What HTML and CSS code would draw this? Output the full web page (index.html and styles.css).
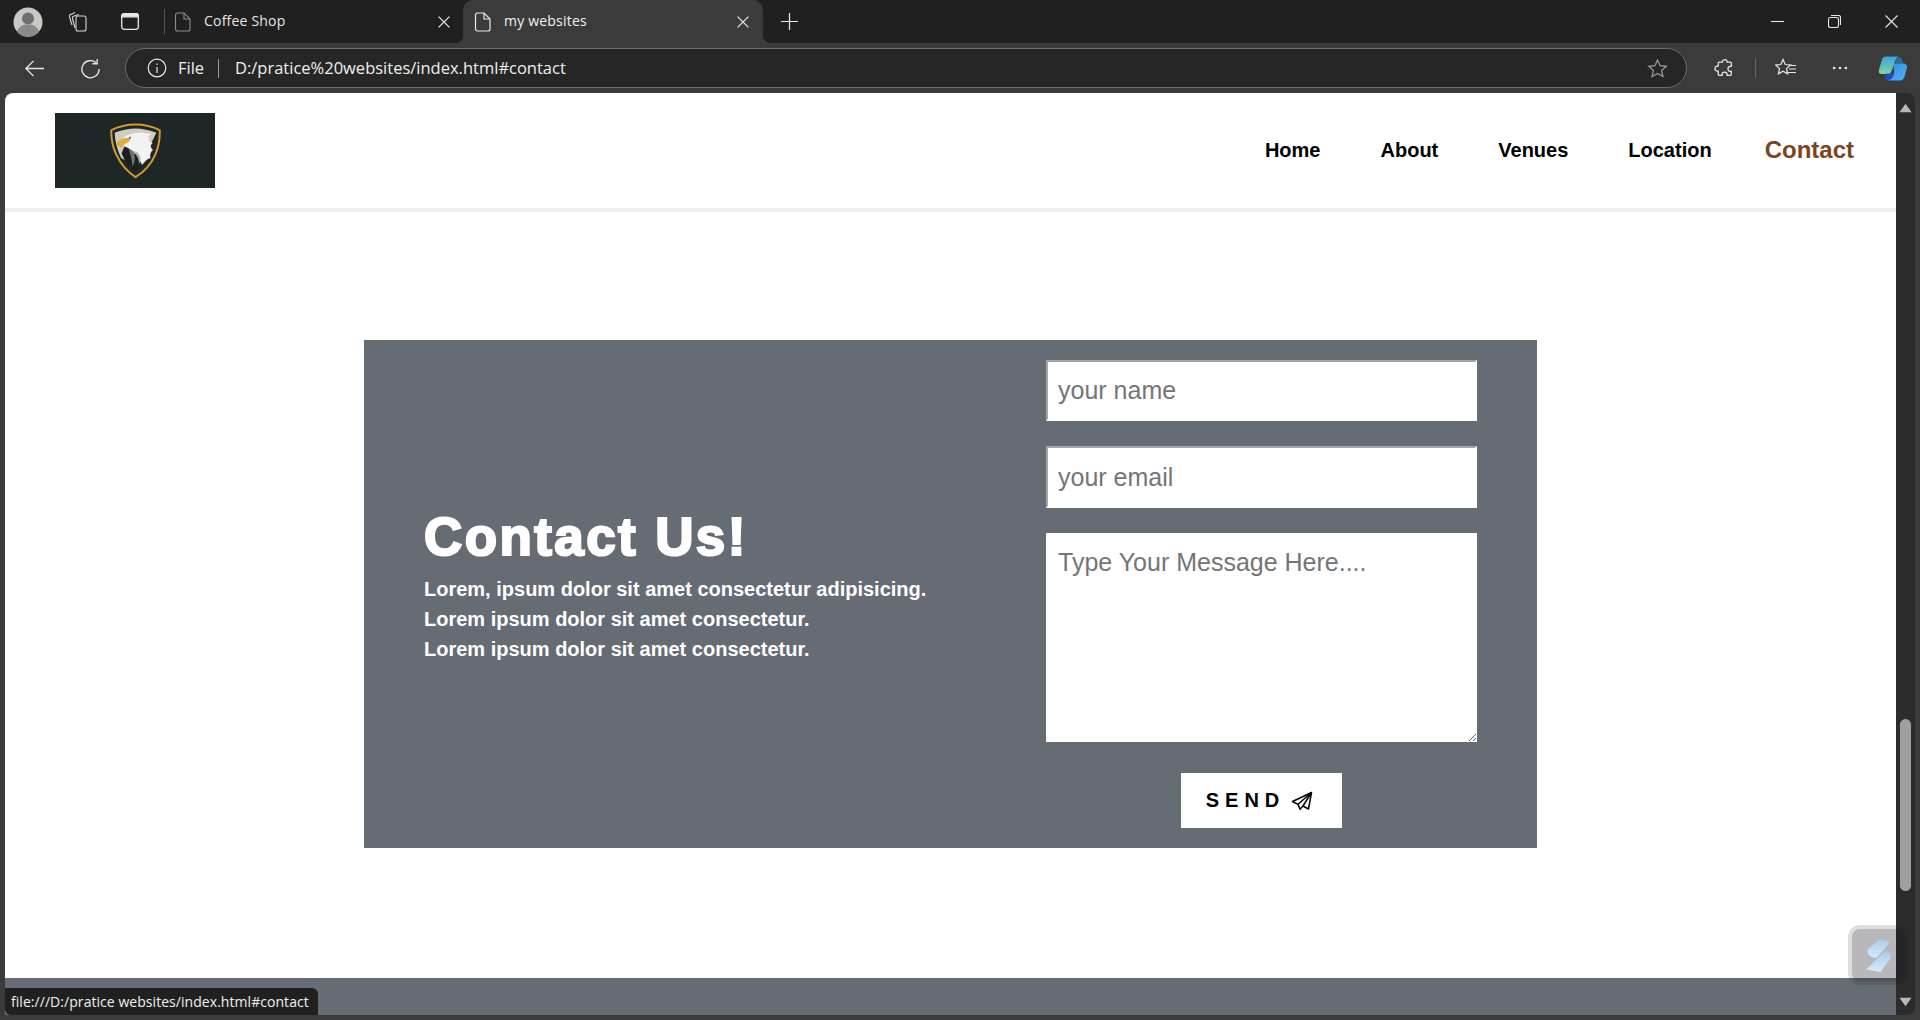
FILE: index.html
```html
<!DOCTYPE html>
<html lang="en">
<head>
<meta charset="utf-8">
<title>my websites</title>
<link rel="stylesheet" href="styles.css">
</head>
<body>
<div class="browser">
  <div class="tabstrip">
    <div class="strip-left">
      <svg class="avatar" viewBox="0 0 30 30"><circle cx="15" cy="15" r="14.5" fill="#c9c8c4"/><circle cx="15" cy="11.5" r="6" fill="#6f6f6f"/><path d="M4 25c2-6 6-7.500 11-7.500s9 1.500 11 7.500a14.500 14.500 0 0 1-22 0z" fill="#8a8a8a"/></svg>
      <svg class="ico-coll" viewBox="0 0 22 21" fill="none" stroke="#d6d6d6" stroke-width="1.100"><rect x="10" y="5" width="10" height="15" rx="2"/><path d="M9 17 6.500 7.500c-.3-1.300.3-2.200 1.500-2.500L13 3.500"/><path d="M6 14 3.500 6c-.4-1.300.2-2.300 1.400-2.600L9 1.500"/></svg>
      <svg class="ico-layout" viewBox="0 0 18 17" fill="none" stroke="#e8e8e8" stroke-width="1.300"><rect x=".7" y=".7" width="16.600" height="15.600" rx="2.500"/><path d="M.7 3.200a2.500 2.500 0 0 1 2.500-2.500h11.600a2.500 2.500 0 0 1 2.500 2.500v.6H.7z" fill="#e8e8e8"/></svg>
      <span class="strip-sep"></span>
    </div>
    <div class="tab">
      <svg class="tab-ico" viewBox="0 0 17 20" fill="none" stroke="#8b8b8b" stroke-width="1.100"><path d="M3.500 1H10l6 6v10a2 2 0 0 1-2 2H3.500a2 2 0 0 1-2-2V3a2 2 0 0 1 2-2z"/><path d="M10 1v6h6"/></svg>
      <span class="tab-title">Coffee Shop</span>
      <svg class="tab-x" viewBox="0 0 10 10" stroke="#e6e6e6" stroke-width="1.100"><path d="M.5.500l9 9M9.500.500l-9 9"/></svg>
    </div>
    <div class="tab active">
      <svg class="tab-ico" viewBox="0 0 17 20" fill="none" stroke="#eaeaea" stroke-width="1.200"><path d="M3.500 1H10l6 6v10a2 2 0 0 1-2 2H3.500a2 2 0 0 1-2-2V3a2 2 0 0 1 2-2z"/><path d="M10 1v6h6"/></svg>
      <span class="tab-title">my websites</span>
      <svg class="tab-x" viewBox="0 0 10 10" stroke="#e6e6e6" stroke-width="1.100"><path d="M.5.500l9 9M9.500.500l-9 9"/></svg>
    </div>
    <svg class="tab-plus" viewBox="0 0 18 18" stroke="#e8e8e8" stroke-width="1.300"><path d="M9 0v18M0 9h18"/></svg>
    <div class="win-controls">
      <svg viewBox="0 0 13 13" stroke="#e8e8e8" stroke-width="1.100" fill="none"><path d="M0 6.500h13"/></svg>
      <svg viewBox="0 0 13 13" stroke="#e8e8e8" stroke-width="1.100" fill="none"><rect x=".5" y="2.500" width="10" height="10" rx="2"/><path d="M3 .5h7.500a2 2 0 0 1 2 2V10"/></svg>
      <svg viewBox="0 0 13 13" stroke="#e8e8e8" stroke-width="1.100" fill="none"><path d="M.5.500l12 12M12.500.500l-12 12"/></svg>
    </div>
  </div>
  <div class="toolbar">
    <svg class="nav-ico" viewBox="0 0 22 22" fill="none" stroke="#e8e8e8" stroke-width="1.400"><path d="M21 11H2M10 3l-8 8 8 8"/></svg>
    <svg class="nav-ico reload" viewBox="0 0 22 22" fill="none" stroke="#e8e8e8" stroke-width="1.400"><path d="M17 5a9 9 0 1 0 3 6.500"/><path d="M18 1v5h-5"/></svg>
    <div class="omnibox">
      <svg class="info" viewBox="0 0 20 20" fill="none" stroke="#e8e8e8" stroke-width="1.200"><circle cx="10" cy="10" r="8.800"/><path d="M10 9v6M10 5.500v1.500"/></svg>
      <span class="scheme">File</span>
      <span class="omni-sep"></span>
      <span class="url">D:/pratice%20websites/index.html#contact</span>
      <svg class="star" viewBox="0 0 22 22" fill="none" stroke="#9a9a9a" stroke-width="1.300"><path d="M11 2l2.700 6 6.500.7-4.900 4.300 1.400 6.400-5.700-3.300-5.700 3.300 1.400-6.400L1.800 8.700 8.300 8z"/></svg>
    </div>
    <div class="tool-icons">
      <svg class="tool puzzle" viewBox="0 0 20 20" fill="none" stroke="#e8e8e8" stroke-width="1.200"><path d="M8 3.500a2.300 2.300 0 0 1 4.500-.3v.8h3a1 1 0 0 1 1 1v3h-.8a2.400 2.400 0 0 0 0 4.800h.8v2.700a1 1 0 0 1-1 1h-3v-.7a2.400 2.400 0 0 0-4.800 0v.7H5a1 1 0 0 1-1-1v-3h-.7a2.400 2.400 0 0 1 0-4.800H4V5a1 1 0 0 1 1-1h3z"/></svg>
      <span class="tool-sep"></span>
      <svg class="tool fav" viewBox="0 0 22 20" fill="none" stroke="#e8e8e8" stroke-width="1.200"><path d="M8 1.500l2.200 5 5.300.5-4 3.600 1.100 5.200L8 13.200l-4.600 2.600 1.100-5.200-4-3.600 5.300-.5z"/><path d="M14 7.500h7M14 11h7M13 14.500h8"/></svg>
      <svg class="tool dots" viewBox="0 0 20 20" fill="#e8e8e8"><circle cx="3.500" cy="10" r="1.500"/><circle cx="10" cy="10" r="1.500"/><circle cx="16.500" cy="10" r="1.500"/></svg>
      <svg class="copilot" viewBox="0 0 30 26">
        <defs>
          <linearGradient id="cpa" x1="0" y1="0" x2="0" y2="1"><stop offset="0" stop-color="#3aa4e0"/><stop offset="1" stop-color="#7fd3a0"/></linearGradient>
          <linearGradient id="cpb" x1="0" y1="0" x2="1" y2="1"><stop offset="0" stop-color="#2f8fe6"/><stop offset="1" stop-color="#4fb0ef"/></linearGradient>
        </defs>
        <path d="M8 1h12l-1.500 1.500C17 5 15 14 12 18.500H3.500C1.500 18.500.4 17 .8 15L4 4c.5-2 2-3 4-3z" fill="url(#cpa)"/>
        <path d="M20 1c2 0 3 1 4 3l1.500 4h-8L18 4z" fill="#2a6f93"/>
        <path d="M7 24c4 1 8 0 9-2l2-4H8z" fill="#2648c8"/>
        <path d="M16 8h9c3 0 4.500 2 4 4l-2.500 9c-.5 2-2 4-5 4H10c3-1 5-3 6-7z" fill="url(#cpb)"/>
      </svg>
    </div>
  </div>
  <div class="content-row">
    <div class="viewport">
      <header class="site-header">
        <div class="logo">
          <svg class="eagle" viewBox="28 24 154 168">
            <path d="M105 28C130 28 158 35 178 45 180 90 165 150 105 187 50 150 30 90 32 45 52 35 80 28 105 28z" fill="#1f2626" stroke="#d09a35" stroke-width="6"/>
            <path d="M42 53C60 45 85 40 105 40 125 40 150 45 168 53L150 90 75 135 62 130C50 105 43 80 42 53z" fill="#cfcdbf"/>
            <path d="M65 72C85 50 125 50 155 58 140 62 140 65 150 70 140 72 145 78 157 85 148 88 150 98 158 105 150 110 148 120 150 130 140 130 130 145 125 150 118 135 105 110 95 105 85 100 78 95 72 92z" fill="#f2f2f2"/>
            <path d="M72 95C85 98 100 110 108 125 118 140 118 155 105 170 90 160 70 135 63 115 66 110 68 100 72 95z" fill="#1a1f20"/>
            <path d="M84 102C90 115 94 135 96 155 104 140 106 125 98 110z" fill="#6f7477"/>
            <path d="M98 108C108 118 116 132 116 148 124 135 120 122 110 112z" fill="#a9adae"/>
            <path d="M48 88C50 78 60 70 85 68L90 75C80 85 72 88 65 90 65 96 68 100 72 100 62 98 52 92 48 88z" fill="#e2a93b"/>
            <circle cx="88" cy="68" r="3" fill="#a83232"/>
          </svg>
        </div>
        <nav class="site-nav">
          <a href="#home">Home</a>
          <a href="#about">About</a>
          <a href="#venues">Venues</a>
          <a href="#location">Location</a>
          <a href="#contact" class="current">Contact</a>
        </nav>
      </header>
      <main class="contact-section">
        <section class="contact-card">
          <div class="contact-copy">
            <h1>Contact Us!</h1>
            <p>Lorem, ipsum dolor sit amet consectetur adipisicing.<br>Lorem ipsum dolor sit amet consectetur.<br>Lorem ipsum dolor sit amet consectetur.</p>
          </div>
          <form class="contact-form">
            <input type="text" class="field" placeholder="your name">
            <input type="email" class="field email" placeholder="your email">
            <textarea class="message" placeholder="Type Your Message Here...."></textarea>
            <button type="button" class="send">SEND
              <svg class="plane" viewBox="0 0 22 20" fill="none" stroke="#000" stroke-width="1.500" stroke-linejoin="round"><path d="M20.500 1.500 1.500 10.500l5.500 2.800 2 5 3-3.300 5.500 3z"/><path d="M20.500 1.500 7 13.300M12 15l8.500-13.500"/></svg>
            </button>
          </form>
        </section>
      </main>
      <footer class="site-footer"></footer>
      <div class="status-bubble">file:///D:/pratice websites/index.html#contact</div>
    </div>
    <div class="scrollbar">
      <svg class="arrow" viewBox="0 0 14 10" fill="#b8b8b8"><path d="M7 .5l6.500 9H.5z"/></svg>
      <div class="track"><div class="thumb"></div></div>
      <svg class="arrow" viewBox="0 0 14 10" fill="#b8b8b8"><path d="M7 9.500l6.500-9H.5z"/></svg>
    </div>
    <div class="float-widget">
      <svg viewBox="0 0 25 33"><defs><linearGradient id="fw" x1="0" y1="0" x2="0" y2="1"><stop offset="0" stop-color="#a9cdea"/><stop offset="1" stop-color="#d8e9f8"/></linearGradient></defs><path d="M14 0 24.500 2.500 11.500 18Q8 20 4 17 0 14 2 10z" fill="url(#fw)"/><path d="M18 13Q22 12 24 15 26 18 24 20L14.500 33 0 30.500z" fill="url(#fw)"/></svg>
    </div>
  </div>
</div>
</body>
</html>
```
FILE: styles.css
```css
* { box-sizing: border-box; }
html, body { margin: 0; height: 100%; overflow: hidden; }
body { background: #3b3b3b; font-family: "Liberation Sans", Arial, sans-serif; }
.browser { display: flex; flex-direction: column; height: 1020px; width: 1920px; }

.tabstrip { height: 43px; background: #202020; display: flex; align-items: stretch; flex: none; }
.strip-left { display: flex; align-items: center; width: 164px; padding-left: 13px; flex: none; }
.avatar { width: 30px; height: 30px; flex: none; }
.ico-coll { width: 22px; height: 21px; margin-left: 23px; flex: none; }
.ico-layout { width: 18px; height: 17px; margin-left: 33px; flex: none; }
.strip-sep { width: 1px; height: 25px; background: #555; margin-left: 25px; flex: none; }
.tab { width: 299px; display: flex; align-items: center; padding: 0 13px 0 10px; color: #e6e6e6; font: 14px "Open Sans", sans-serif; flex: none; }
.tab.active { background: #3b3b3b; border-radius: 10px 10px 0 0; color: #f2f2f2; width: 300px; padding: 0 14px 0 11px; position: relative; }
.tab.active::before, .tab.active::after { content: ""; position: absolute; bottom: 0; width: 8px; height: 8px; }
.tab.active::before { left: -8px; background: radial-gradient(circle at 0 0, transparent 8px, #3b3b3b 8.5px); }
.tab.active::after { right: -8px; background: radial-gradient(circle at 100% 0, transparent 8px, #3b3b3b 8.5px); }
.tab-ico { width: 17px; height: 20px; flex: none; }
.tab-title { margin: 0 0 2px 13px; flex: 1; letter-spacing: .2px; }
.tab-x { width: 12px; height: 12px; flex: none; }
.tab-plus { width: 17px; height: 17px; margin: 13px 0 0 18px; flex: none; }
.win-controls { margin-left: auto; display: flex; align-items: center; gap: 44px; padding-right: 22px; }
.win-controls svg { width: 13px; height: 13px; }

.toolbar { height: 50px; background: #3b3b3b; display: flex; align-items: center; flex: none; padding-left: 24px; }
.nav-ico { width: 21px; height: 21px; flex: none; }
.reload { margin-left: 35px; }
.omnibox { width: 1562px; height: 40px; margin-left: 24px; background: #262626; border: 1px solid #6b6b6b; border-radius: 20px; display: flex; align-items: center; padding: 0 18px 0 21px; color: #f0f0f0; font: 16.5px "Open Sans", sans-serif; flex: none; }
.info { width: 20px; height: 20px; flex: none; }
.scheme { margin: 0 0 2px 11px; width: 26px; flex: none; }
.omni-sep { width: 1px; height: 19px; background: #9a9a9a; margin: 0 16px 0 14px; flex: none; }
.url { flex: 1; margin-bottom: 2px; }
.star { width: 21px; height: 21px; flex: none; }
.tool-icons { display: flex; align-items: center; flex: none; margin-left: 27px; }
.tool.puzzle { width: 21px; height: 21px; }
.tool-sep { width: 1px; height: 20px; background: #666; margin: 0 19px 0 20px; }
.tool.fav { width: 22px; height: 20px; }
.tool.dots { width: 18px; height: 18px; margin-left: 34px; }
.copilot { width: 30px; height: 27px; margin-left: 29px; }

.content-row { flex: 1; display: flex; min-height: 0; padding: 0 5px 5px; position: relative; }
.viewport { flex: 1; background: #fff; border-radius: 8px 0 0 0; overflow: hidden; display: flex; flex-direction: column; position: relative; }
.scrollbar { width: 19px; background: #2c2c2c; border-radius: 0 8px 8px 0; display: flex; flex-direction: column; align-items: center; padding: 10px 0 8px; flex: none; }
.arrow { width: 13px; height: 10px; flex: none; }
.track { flex: 1; width: 100%; display: flex; flex-direction: column; justify-content: flex-end; padding: 0 4px 106px; }
.thumb { height: 172px; background: #9f9f9f; border-radius: 5.5px; }

.site-header { height: 119px; border-bottom: 4px solid #eee; display: flex; align-items: center; justify-content: space-between; padding: 0 42px 0 50px; flex: none; }
.logo { width: 160px; height: 75px; background: #1f2626; display: flex; align-items: center; justify-content: center; }
.eagle { width: 51px; height: 56px; }
.site-nav { display: flex; align-items: center; gap: 60px; }
.site-nav a { color: #000; font-weight: 700; font-size: 20px; text-decoration: none; }
.site-nav a.current { color: #7c4420; font-size: 24px; margin: 0 0 2px -7px; }

.contact-section { flex: 1; display: flex; justify-content: center; align-items: flex-start; padding: 128px 0 0 0; }
.contact-card { width: 1173px; height: 508px; background: #666c73; display: flex; }
.contact-copy { width: 682px; padding: 166px 0 0 60px; color: #fff; flex: none; }
.contact-copy h1 { margin: 0; font-size: 53px; line-height: 61px; font-weight: 900; letter-spacing: 2.4px; -webkit-text-stroke: 2.2px #fff; }
.contact-copy p { margin: 7px 0 0; font-size: 20px; line-height: 30px; font-weight: 700; }

.contact-form { width: 431px; padding-top: 20px; display: flex; flex-direction: column; align-items: stretch; flex: none; }
.field { height: 61px; border: 2px solid; border-color: #a5a5a5 #fff #fff #a5a5a5; background: #fff; padding: 0 10px; font: 25px "Liberation Sans", Arial, sans-serif; margin-bottom: 25px; outline: none; }
.field.email { height: 62px; }
.field::placeholder, .message::placeholder { color: #757575; opacity: 1; }
.message { height: 209px; border: none; background: #fff; padding: 14px 12px; font: 25px/1.2 "Liberation Sans", Arial, sans-serif; outline: none; resize: vertical; }
.send { align-self: center; width: 161px; height: 55px; margin-top: 31px; background: #fff; border: none; color: #000; font: 700 20px "Liberation Sans", Arial, sans-serif; letter-spacing: 6px; display: flex; align-items: center; justify-content: center; padding: 0 4px 0 0; white-space: nowrap; }
.plane { width: 22px; height: 20px; margin-left: 6px; }

.site-footer { height: 37px; background: #666c73; flex: none; }
.status-bubble { position: absolute; left: 0; bottom: 0; height: 27px; padding: 0 9px 0 6px; background: #202020; color: #f0f0f0; font: 14px/27px "Open Sans", sans-serif; border-radius: 0 6px 0 6px; letter-spacing: .05px; }
.float-widget { position: absolute; left: 1848px; top: 832px; width: 60px; height: 60px; background: rgba(20,20,30,.3); background-clip: padding-box; border: 4px solid rgba(20,20,30,.14); border-radius: 12px; display: flex; align-items: center; justify-content: center; }
.float-widget svg { width: 25px; height: 33px; }
```
